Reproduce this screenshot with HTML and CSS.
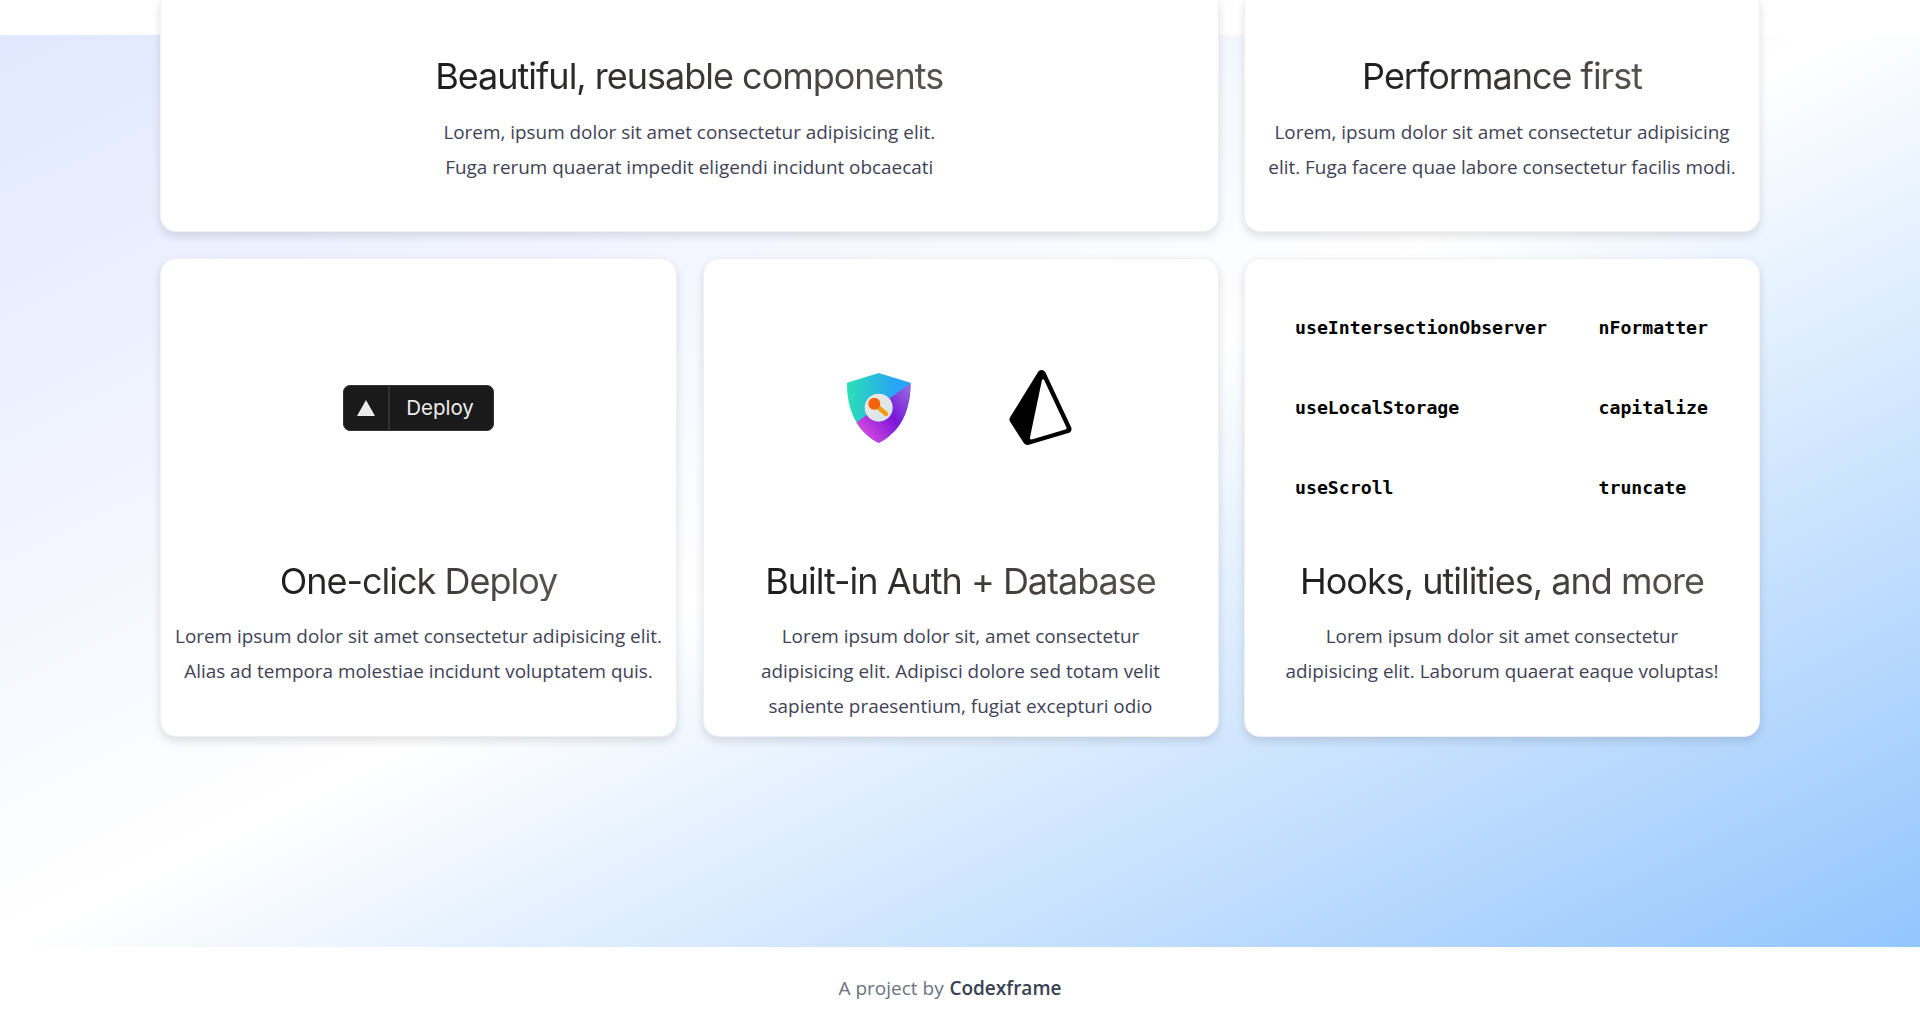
FILE: index.html
```html
<!DOCTYPE html>
<html lang="en">
<head>
  <meta charset="UTF-8" />
  <title>Features</title>
  <link rel="stylesheet" href="styles.css">
</head>
<body>

  <main class="features">
    <section class="grid">
      <!-- Top row is scrolled past, only the lower part of the cards shows -->
      <article class="card card-wide card-top">
        <h3 class="card-title">Beautiful, reusable components</h3>
        <p class="card-text">Lorem, ipsum dolor sit amet consectetur adipisicing elit.<br>Fuga rerum quaerat impedit eligendi incidunt obcaecati</p>
      </article>
      <article class="card card-top">
        <h3 class="card-title">Performance first</h3>
        <p class="card-text">Lorem, ipsum dolor sit amet consectetur adipisicing<br>elit. Fuga facere quae labore consectetur facilis modi.</p>
      </article>

      <article class="card">
        <div class="demo">
          <div class="deploy">
            <span class="deploy-icon"></span>
            <span class="deploy-label">Deploy</span>
          </div>
        </div>
        <h3 class="card-title">One-click Deploy</h3>
        <p class="card-text">Lorem ipsum dolor sit amet consectetur adipisicing elit.<br>Alias ad tempora molestiae incidunt voluptatem quis.</p>
      </article>

      <article class="card">
        <div class="demo demo-logos">
          <svg class="logo-shield" viewBox="0 0 64 70" aria-hidden="true">
            <defs>
              <linearGradient id="shieldTop" x1="0" y1="0" x2="1" y2="0">
                <stop offset="0" stop-color="#2be0b4" />
                <stop offset="0.75" stop-color="#28a5f5" />
              </linearGradient>
              <linearGradient id="shieldBottom" gradientUnits="userSpaceOnUse" x1="8" y1="58" x2="62" y2="14">
                <stop offset="0" stop-color="#e04fe0" />
                <stop offset="0.55" stop-color="#7a16d8" />
                <stop offset="1" stop-color="#9468e0" />
              </linearGradient>
              <linearGradient id="shieldDisc" x1="0" y1="0" x2="1" y2="1">
                <stop offset="0" stop-color="#f8e6dc" />
                <stop offset="1" stop-color="#cfe8f2" />
              </linearGradient>
              <clipPath id="shieldLower">
                <polygon points="10,49 64,10 64,70 0,70 0,49" />
              </clipPath>
            </defs>
            <path d="M31.7 0L63.5 9.7C63.8 35 55 58 31.7 70C8.5 58 -.2 35 0 9.7Z" fill="url(#shieldTop)" />
            <path d="M31.7 0L63.5 9.7C63.8 35 55 58 31.7 70C8.5 58 -.2 35 0 9.7Z" fill="url(#shieldBottom)" clip-path="url(#shieldLower)" />
            <circle cx="31.7" cy="34.7" r="14" fill="url(#shieldDisc)" />
            <line x1="28" y1="31.5" x2="39" y2="41" stroke="#f59a0c" stroke-width="4.5" stroke-linecap="round" />
            <circle cx="27.3" cy="30.7" r="6" fill="#f4640c" />
          </svg>
          <svg class="logo-prisma" viewBox="0 0 24 24" aria-hidden="true">
            <path d="M21.8068 18.2848L13.5528.7565c-.207-.4382-.639-.7273-1.1286-.7541-.5023-.0293-.9523.2118-1.2062.6253L2.266 15.1271c-.2773.4518-.2718 1.0091.0158 1.4555l4.3759 6.7786c.2608.4046.7127.6388 1.1823.6388.1332 0 .267-.0188.3987-.0577l12.7019-3.7568c.3891-.1151.7072-.3904.8737-.7553s.1633-.7828-.0075-1.1454zm-1.8481.7519L9.1814 22.2242c-.3292.0975-.6448-.1873-.5756-.5194l3.8501-18.4386c.072-.3448.5486-.3996.699-.0803l7.1288 15.138c.1344.2856-.019.6224-.325.7128z" />
          </svg>
        </div>
        <h3 class="card-title">Built-in Auth + Database</h3>
        <p class="card-text">Lorem ipsum dolor sit, amet consectetur<br>adipisicing elit. Adipisci dolore sed totam velit<br>sapiente praesentium, fugiat excepturi odio</p>
      </article>

      <article class="card">
        <div class="demo demo-code">
          <code>useIntersectionObserver</code>
          <code>nFormatter</code>
          <code>useLocalStorage</code>
          <code>capitalize</code>
          <code>useScroll</code>
          <code>truncate</code>
        </div>
        <h3 class="card-title">Hooks, utilities, and more</h3>
        <p class="card-text">Lorem ipsum dolor sit amet consectetur<br>adipisicing elit. Laborum quaerat eaque voluptas!</p>
      </article>
    </section>
  </main>

  <footer class="footer">
    A project by <strong>Codexframe</strong>
  </footer>

</body>
</html>
```

FILE: styles.css
```css
/* Base */
body {
  margin: 0;
  font-family: "Open Sans", Arial, sans-serif;
  background: #fff;
}

/* Features band, white strip on top is the end of the previous section */
.features {
  height: 947px;
  box-sizing: border-box;
  background:
    linear-gradient(#fff, #fff) top / 100% 35px no-repeat,
    linear-gradient(to bottom right, #e0e7ff 0%, #fff 50%, #93c5fd 100%);
}

.grid {
  display: grid;
  grid-template-columns: 517px 516px 516px;
  grid-template-rows: 232px 479px;
  gap: 26px 25.5px;
  width: 1600px;
  margin: 0 auto;
}

/* Cards */
.card {
  display: flex;
  flex-direction: column;
  align-items: center;
  box-sizing: border-box;
  padding: 0 12px;
  background: #fff;
  border: 1px solid #eff0f3;
  border-radius: 16px;
  box-shadow: 0 4px 10px rgba(0, 0, 0, 0.12);
  overflow: hidden;
}

.card-wide {
  grid-column: span 2;
}

.card-top {
  justify-content: flex-end;
  padding-bottom: 46px;
  border-top: 0;
  border-top-left-radius: 0;
  border-top-right-radius: 0;
}

.card-title {
  display: inline-block;
  margin: 0 0 18px;
  font-family: Inter, Arial, sans-serif;
  font-size: 36px;
  line-height: 40px;
  font-weight: 400;
  letter-spacing: -0.028em;
  white-space: nowrap;
  background: linear-gradient(to right, #1c1c1c, #57534e);
  -webkit-background-clip: text;
  background-clip: text;
  color: transparent;
}

.card-top .card-title {
  margin-bottom: 19px;
}

.card-text {
  margin: 0;
  font-size: 18.9px;
  line-height: 35px;
  text-align: center;
  white-space: nowrap;
  color: #3f4257;
}

/* Demo area above the title */
.demo {
  flex: none;
  display: flex;
  align-items: center;
  justify-content: center;
  align-self: stretch;
  height: 297px;
  margin-bottom: 5px;
}

/* Deploy button */
.deploy {
  display: flex;
  align-items: stretch;
  height: 46px;
  box-sizing: border-box;
  background: #1a1a1a;
  border: 1px solid #333;
  border-radius: 7px;
  color: #ececec;
}

.deploy-icon {
  display: flex;
  align-items: center;
  justify-content: center;
  width: 44px;
  border-right: 2px solid #333;
}

.deploy-icon::before {
  content: "";
  width: 0;
  height: 0;
  border-left: 9px solid transparent;
  border-right: 9px solid transparent;
  border-bottom: 16px solid #ececec;
}

.deploy-label {
  display: flex;
  align-items: center;
  padding: 0 19px 0 16px;
  font-family: Inter, Arial, sans-serif;
  font-size: 20.5px;
}

/* Logos */
.demo-logos {
  gap: 92px;
  padding-left: 4px;
  box-sizing: border-box;
}

.logo-shield {
  width: 64px;
  height: 70px;
}

.logo-prisma {
  width: 75px;
  height: 75px;
}

/* Code names */
.demo-code {
  display: grid;
  grid-template-columns: auto auto;
  justify-content: space-between;
  align-content: center;
  row-gap: 80px;
  box-sizing: border-box;
  padding: 0 39px 0 38px;
}

.demo-code code {
  font-family: "DejaVu Sans Mono", "Liberation Mono", monospace;
  font-size: 18.2px;
  line-height: 0;
  font-weight: 700;
  color: #000;
}

/* Footer */
.footer {
  display: flex;
  align-items: center;
  justify-content: center;
  gap: 0.3em;
  height: 80px;
  box-sizing: border-box;
  padding: 2px 20px 0 0;
  font-size: 19px;
  color: #6b7280;
}

.footer strong {
  font-weight: 600;
  color: #374151;
}
```
